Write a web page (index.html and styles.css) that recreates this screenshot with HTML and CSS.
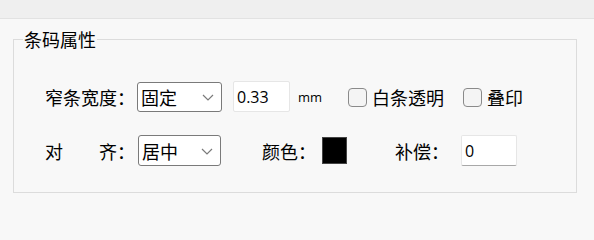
FILE: index.html
```html
<!DOCTYPE html>
<html lang="zh-CN">
<head>
<meta charset="utf-8">
<title>条码属性</title>
<link rel="stylesheet" href="styles.css">
</head>
<body>
<div class="topbar"></div>
<fieldset class="group">
  <legend class="group-title">条码属性</legend>
  <div class="row row-1">
    <span class="label">窄条宽度：</span>
    <div class="select sel-1"><span class="sel-text">固定</span>
      <svg class="chev" width="12" height="7" viewBox="0 0 12 7"><polyline points="1,1 6,6 11,1" fill="none" stroke="#7a7a7a" stroke-width="1.2"/></svg>
    </div>
    <div class="textbox tb-width"><span class="tb-text">0.33</span></div>
    <span class="unit">mm</span>
    <label class="check chk-1"><span class="box"></span><span class="check-text">白条透明</span></label>
    <label class="check chk-2"><span class="box"></span><span class="check-text">叠印</span></label>
  </div>
  <div class="row row-2">
    <span class="label label-split"><span>对</span><span>齐：</span></span>
    <div class="select sel-2"><span class="sel-text">居中</span>
      <svg class="chev" width="12" height="7" viewBox="0 0 12 7"><polyline points="1,1 6,6 11,1" fill="none" stroke="#7a7a7a" stroke-width="1.2"/></svg>
    </div>
    <span class="label-inline color-label">颜色：</span>
    <span class="swatch"></span>
    <span class="label-inline comp-label">补偿：</span>
    <div class="textbox tb-comp"><span class="tb-text">0</span></div>
  </div>
</fieldset>
</body>
</html>
```
FILE: styles.css
```css
html, body {
  margin: 0;
  padding: 0;
  background: #f8f8f8;
  width: 594px;
  height: 202px;
  overflow: hidden;
  font-family: "Noto Sans CJK SC", "Noto Sans", sans-serif;
  color: #000;
}

.topbar {
  height: 18px;
  background: #efefef;
  border-bottom: 1px solid #e2e2e2;
}

.group {
  box-sizing: border-box;
  width: 564px;
  margin: 10px 0 0 13px;
  border: 1px solid #dcdcdc;
  padding: 32px 0 26px 0;
  min-width: 0;
}

.group-title {
  font-size: 18px;
  line-height: 20px;
  height: 20px;
  padding: 0 1px;
  margin-left: 9px;
}

.row {
  display: flex;
  align-items: center;
  height: 31px;
  padding-left: 31px;
  font-size: 18px;
  line-height: 20px;
}

.row-2 {
  margin-top: 23px;
}

.label {
  width: 90px;
  white-space: nowrap;
}

.label-split {
  display: flex;
  justify-content: space-between;
}

.select {
  box-sizing: border-box;
  height: 30px;
  border: 1px solid #7a7a7a;
  border-radius: 3px;
  background: #fff;
  display: flex;
  align-items: center;
  justify-content: space-between;
  padding: 0 7px 0 3px;
}

.sel-1 {
  width: 85px;
  margin-left: 2px;
}

.sel-2 {
  width: 83px;
  height: 31px;
  margin-left: 3px;
}

.chev {
  display: block;
  margin-top: 1px;
}

.textbox {
  box-sizing: border-box;
  height: 31px;
  background: #fff;
  border: 1px solid #e6e6e6;
  border-bottom: 1px solid #a8a8a8;
  border-radius: 2px;
  display: flex;
  align-items: center;
  padding-left: 3px;
  font-family: "Open Sans", "Noto Sans", sans-serif;
  font-size: 16px;
  color: #000;
}

.tb-width {
  width: 57px;
  margin-left: 11px;
  border-bottom-color: #e6e6e6;
}

.tb-comp {
  width: 56px;
  margin-left: 12px;
}

.unit {
  margin-left: 8px;
  font-family: "Open Sans", "Noto Sans", sans-serif;
  font-size: 13px;
}

.check {
  display: flex;
  align-items: center;
}

.chk-1 {
  margin-left: 26px;
}

.chk-2 {
  margin-left: 19px;
}

.box {
  box-sizing: border-box;
  width: 19px;
  height: 19px;
  border: 1px solid #8a8a8a;
  border-radius: 4px;
  background: #f4f4f4;
  margin-top: 1px;
}

.check-text {
  margin-left: 5px;
}

.color-label {
  margin-left: 41px;
}

.swatch {
  box-sizing: border-box;
  width: 25px;
  height: 27px;
  margin-left: 6px;
  background: #000;
  border: 1px solid #444;
}

.comp-label {
  margin-left: 48px;
}
```
